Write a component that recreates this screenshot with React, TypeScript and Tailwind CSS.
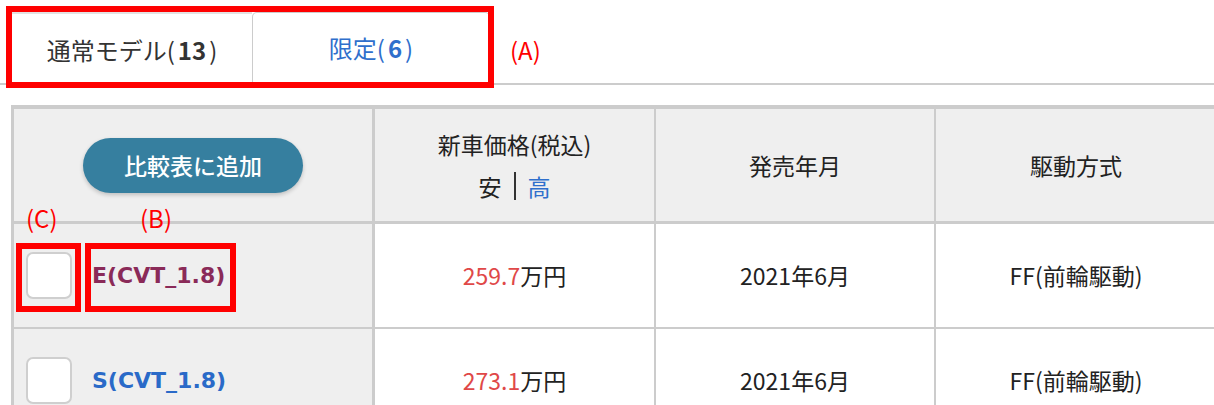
const jp = "font-['Noto_Sans_CJK_JP','Noto_Sans',sans-serif]"

function Checkbox() {
  return <div className="w-[46px] h-[47px] shrink-0 rounded-[7px] border-2 border-[#cfcfcf] bg-white" />
}

interface RowProps {
  name: string
  nameColor: string
  price: string
  date: string
  drive: string
}

function Row({ name, nameColor, price, date, drive }: RowProps) {
  return (
    <>
      <div className="h-[105px] bg-[#efefef] border-r-[3px] border-b-2 border-[#cccccc] flex items-center pl-[12px] gap-[20px]">
        <Checkbox />
        <span className={`font-['DejaVu_Sans',sans-serif] text-[22px] font-bold ${nameColor}`}>{name}</span>
      </div>
      <div className="h-[105px] bg-white border-r-2 border-b-2 border-[#cccccc] flex items-center justify-center text-[23px] text-[#222]">
        <span className="text-[#e04848]">{price}</span>万円
      </div>
      <div className="h-[105px] bg-white border-r-2 border-b-2 border-[#cccccc] flex items-center justify-center text-[23px] text-[#222]">
        {date}
      </div>
      <div className="h-[105px] bg-white border-b-2 border-[#cccccc] flex items-center justify-center text-[23px] text-[#222]">
        {drive}
      </div>
    </>
  )
}

export default function App() {
  return (
    <div className={`relative w-[1214px] h-[405px] overflow-hidden bg-white ${jp}`}>
      {/* tabs */}
      <div className="flex pt-[12px] pl-[12px] border-b-2 border-[#cccccc] h-[85px]">
        <div className="w-[240px] h-[73px] bg-white border-t-2 border-[#e2e2e2] flex items-center justify-center text-[24px] text-[#333] -mb-[2px]">
          通常モデル(<span className="font-bold px-[3px]">13</span>)
        </div>
        <div className="w-[238px] h-[71px] bg-white border border-b-0 border-[#cccccc] rounded-t-[5px] flex items-center justify-center text-[24px] text-[#2f6fcc]">
          限定(<span className="font-bold px-[3px]">6</span>)
        </div>
      </div>

      {/* table */}
      <div className="mt-[20px] ml-[11px] grid grid-cols-[361px_281px_280px_280px] border-t-4 border-l-[3px] border-[#cccccc]">
        <div className="h-[115px] bg-[#efefef] border-r-[3px] border-b-[3px] border-[#cccccc] flex items-center justify-center">
          <button className="w-[220px] h-[55px] rounded-full bg-[#367f9f] text-white text-[23px] font-medium shadow-[0_2px_4px_rgba(0,0,0,0.2)]">
            比較表に追加
          </button>
        </div>
        <div className="h-[115px] bg-[#efefef] border-r-2 border-b-[3px] border-[#cccccc] flex flex-col items-center justify-center gap-[8px] text-[23px] text-[#222]">
          <div>新車価格(税込)</div>
          <div className="flex items-center">
            <span>安</span>
            <span className="mx-[12px] w-[2px] h-[28px] bg-[#333]" />
            <span className="text-[#2f6fcc]">高</span>
          </div>
        </div>
        <div className="h-[115px] bg-[#efefef] border-r-2 border-b-[3px] border-[#cccccc] flex items-center justify-center text-[23px] text-[#222]">
          発売年月
        </div>
        <div className="h-[115px] bg-[#efefef] border-b-[3px] border-[#cccccc] flex items-center justify-center text-[23px] text-[#222]">
          駆動方式
        </div>
        <Row name="E(CVT_1.8)" nameColor="text-[#8a2a58]" price="259.7" date="2021年6月" drive="FF(前輪駆動)" />
        <Row name="S(CVT_1.8)" nameColor="text-[#2a6ac8]" price="273.1" date="2021年6月" drive="FF(前輪駆動)" />
      </div>

      {/* annotations */}
      <div className="absolute left-[6px] top-[6px] w-[488px] h-[82px] border-[6px] border-[#ff0000]" />
      <div className="absolute left-[510px] top-[32px] text-[24px] text-[#ff0000]">(A)</div>
      <div className="absolute left-[26px] top-[200px] text-[24px] text-[#ff0000]">(C)</div>
      <div className="absolute left-[140px] top-[200px] text-[24px] text-[#ff0000]">(B)</div>
      <div className="absolute left-[16px] top-[243px] w-[65px] h-[69px] border-[6px] border-[#ff0000]" />
      <div className="absolute left-[85px] top-[243px] w-[151px] h-[69px] border-[6px] border-[#ff0000]" />
    </div>
  )
}
